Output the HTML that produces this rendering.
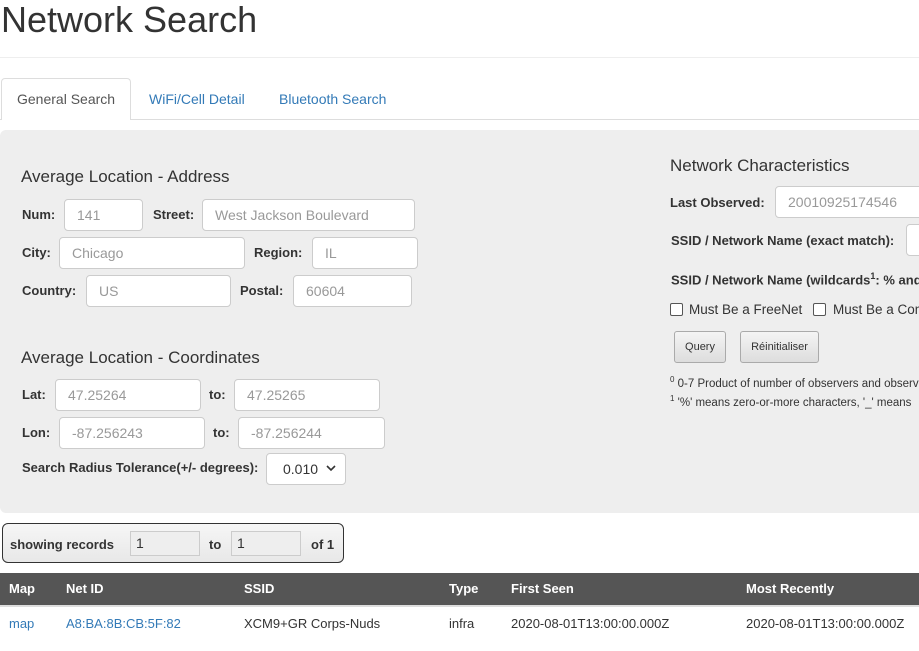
<!DOCTYPE html>
<html><head><meta charset="utf-8"><style>
body{margin:0;width:919px;height:651px;overflow:hidden;font-family:"Liberation Sans",sans-serif;font-size:14px;color:#333;background:#fff;position:relative}
.a{position:absolute;white-space:nowrap}
.b{font-weight:bold;font-size:13px}
.in{position:absolute;box-sizing:border-box;background:#fff;border:1px solid #ccc;border-radius:4px;height:32px;color:#999;font-size:14px;padding-left:12px;line-height:30px;white-space:nowrap;overflow:hidden}
.h{font-size:17px}
.lnk{color:#337ab7}
</style></head><body>
<div class="a" style="left:1px;top:0;font-size:36px;line-height:40px">Network Search</div>
<div class="a" style="left:0;top:57px;width:919px;height:1px;background:#eee"></div>
<div class="a" style="left:0;top:119px;width:919px;height:1px;background:#ddd"></div>
<div class="a" style="left:1px;top:78px;height:42px;border:1px solid #ddd;border-bottom:none;border-radius:4px 4px 0 0;background:#fff;box-sizing:border-box;width:130px"></div>
<div class="a" style="left:17px;top:91px;color:#555">General Search</div>
<div class="a lnk" style="left:149px;top:91px">WiFi/Cell Detail</div>
<div class="a lnk" style="left:279px;top:91px">Bluetooth Search</div>
<div class="a" style="left:0;top:130px;width:925px;height:383px;background:#eee;border-radius:6px"></div>

<div class="a h" style="left:21px;top:167px">Average Location - Address</div>
<div class="a b" style="left:22px;top:207px">Num:</div><div class="in" style="left:64px;top:199px;width:79px">141</div>
<div class="a b" style="left:153px;top:207px">Street:</div><div class="in" style="left:202px;top:199px;width:213px">West Jackson Boulevard</div>
<div class="a b" style="left:22px;top:245px">City:</div><div class="in" style="left:59px;top:237px;width:186px">Chicago</div>
<div class="a b" style="left:254px;top:245px">Region:</div><div class="in" style="left:312px;top:237px;width:106px">IL</div>
<div class="a b" style="left:22px;top:283px">Country:</div><div class="in" style="left:86px;top:275px;width:145px">US</div>
<div class="a b" style="left:240px;top:283px">Postal:</div><div class="in" style="left:293px;top:275px;width:119px">60604</div>

<div class="a h" style="left:21px;top:348px">Average Location - Coordinates</div>
<div class="a b" style="left:22px;top:387px">Lat:</div><div class="in" style="left:55px;top:379px;width:146px">47.25264</div>
<div class="a b" style="left:209px;top:387px">to:</div><div class="in" style="left:234px;top:379px;width:146px">47.25265</div>
<div class="a b" style="left:22px;top:425px">Lon:</div><div class="in" style="left:59px;top:417px;width:146px">-87.256243</div>
<div class="a b" style="left:213px;top:425px">to:</div><div class="in" style="left:238px;top:417px;width:147px">-87.256244</div>
<div class="a b" style="left:22px;top:460px">Search Radius Tolerance(+/- degrees):</div>
<div class="in" style="left:266px;top:453px;width:80px;color:#333;padding-left:16px">0.010</div>
<svg class="a" style="left:326px;top:465px" width="10" height="8"><path d="M1 1L5 5L9 1" stroke="#333" stroke-width="1.6" fill="none"/></svg>

<div class="a h" style="left:670px;top:156px">Network Characteristics</div>
<div class="a b" style="left:670px;top:195px">Last Observed:</div><div class="in" style="left:775px;top:186px;width:160px">20010925174546</div>
<div class="a b" style="left:671px;top:233px">SSID / Network Name (exact match):</div><div class="in" style="left:906px;top:224px;width:40px"></div>
<div class="a b" style="left:671px;top:271px">SSID / Network Name (wildcards<sup style="font-size:9px">1</sup>: % and</div>
<div class="a" style="left:670px;top:303px;width:11px;height:11px;border:1px solid #555;border-radius:2px;background:#fff"></div>
<div class="a" style="left:689px;top:302px;font-size:13.5px">Must Be a FreeNet</div>
<div class="a" style="left:813px;top:303px;width:11px;height:11px;border:1px solid #555;border-radius:2px;background:#fff"></div>
<div class="a" style="left:833px;top:302px;font-size:13.5px">Must Be a Com</div>
<div class="a" style="left:674px;top:331px;width:52px;height:32px;box-sizing:border-box;border:1px solid #aaa;border-radius:3px;background:linear-gradient(#f4f4f4,#ddd);font-size:11px;text-align:center;line-height:30px">Query</div>
<div class="a" style="left:740px;top:331px;width:79px;height:32px;box-sizing:border-box;border:1px solid #aaa;border-radius:3px;background:linear-gradient(#f4f4f4,#ddd);font-size:11px;text-align:center;line-height:30px">Réinitialiser</div>
<div class="a" style="left:670px;top:375px;font-size:11.5px"><sup style="font-size:8px">0</sup> 0-7 Product of number of observers and observations</div>
<div class="a" style="left:670px;top:394px;font-size:11.5px"><sup style="font-size:8px">1</sup> '%' means zero-or-more characters, '_' means</div>

<div class="a" style="left:2px;top:523px;width:342px;height:40px;box-sizing:border-box;border:1px solid #333;border-radius:6px;background:linear-gradient(#f6f6f6,#e8e8e8)"></div>
<div class="a b" style="left:10px;top:537px">showing records</div>
<div class="in" style="left:130px;top:531px;width:70px;height:25px;line-height:23px;color:#333;background:#eee;border-radius:0;padding-left:5px">1</div>
<div class="a b" style="left:209px;top:537px">to</div>
<div class="in" style="left:231px;top:531px;width:70px;height:25px;line-height:23px;color:#333;background:#eee;border-radius:0;padding-left:5px">1</div>
<div class="a b" style="left:311px;top:537px">of 1</div>

<div class="a" style="left:0;top:573px;width:919px;height:32px;background:#555;border-bottom:2px solid #ddd"></div>
<div class="a b" style="left:9px;top:581px;color:#fff">Map</div>
<div class="a b" style="left:66px;top:581px;color:#fff">Net ID</div>
<div class="a b" style="left:244px;top:581px;color:#fff">SSID</div>
<div class="a b" style="left:449px;top:581px;color:#fff">Type</div>
<div class="a b" style="left:511px;top:581px;color:#fff">First Seen</div>
<div class="a b" style="left:746px;top:581px;color:#fff">Most Recently</div>
<div class="a lnk" style="left:9px;top:616px;font-size:13px">map</div>
<div class="a lnk" style="left:66px;top:616px;font-size:13px">A8:BA:8B:CB:5F:82</div>
<div class="a" style="left:244px;top:616px;font-size:13px">XCM9+GR Corps-Nuds</div>
<div class="a" style="left:449px;top:616px;font-size:13px">infra</div>
<div class="a" style="left:511px;top:616px;font-size:13px">2020-08-01T13:00:00.000Z</div>
<div class="a" style="left:746px;top:616px;font-size:13px">2020-08-01T13:00:00.000Z</div>
</body></html>
